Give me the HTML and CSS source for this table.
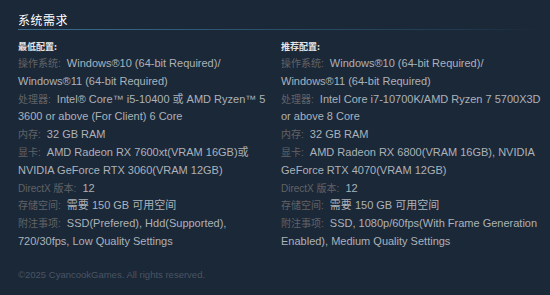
FILE: index.html
```html
<!DOCTYPE html>
<html lang="zh-CN">
  <head>
    <meta charset="UTF-8" />
    <meta name="viewport" content="width=device-width, initial-scale=1.0" />
    <title>系统需求</title>
    <link rel="stylesheet" href="styles.css">
  </head>
  <body>
    <div class="sys-req">
      <h2>系统需求</h2>

      <div class="columns">
        <div class="col">
          <div class="col-title">最低配置:</div>
          <ul class="req-list">
            <li><span class="label">操作系统:</span> Windows®10 (64-bit Required)/ Windows®11 (64-bit Required)</li>
            <li><span class="label">处理器:</span> Intel® Core™ i5-10400 或 AMD Ryzen™ 5 3600 or above (For Client) 6 Core</li>
            <li><span class="label">内存:</span> 32 GB RAM</li>
            <li><span class="label">显卡:</span> AMD Radeon RX 7600xt(VRAM 16GB)或 NVIDIA GeForce RTX 3060(VRAM 12GB)</li>
            <li><span class="label">DirectX 版本:</span> 12</li>
            <li><span class="label">存储空间:</span> 需要 150 GB 可用空间</li>
            <li><span class="label">附注事项:</span> SSD(Prefered), Hdd(Supported), 720/30fps, Low Quality Settings</li>
          </ul>
        </div>

        <div class="col">
          <div class="col-title">推荐配置:</div>
          <ul class="req-list">
            <li><span class="label">操作系统:</span> Windows®10 (64-bit Required)/ Windows®11 (64-bit Required)</li>
            <li><span class="label">处理器:</span> Intel Core i7-10700K/AMD Ryzen 7 5700X3D or above 8 Core</li>
            <li><span class="label">内存:</span> 32 GB RAM</li>
            <li><span class="label">显卡:</span> AMD Radeon RX 6800(VRAM 16GB), NVIDIA GeForce RTX 4070(VRAM 12GB)</li>
            <li><span class="label">DirectX 版本:</span> 12</li>
            <li><span class="label">存储空间:</span> 需要 150 GB 可用空间</li>
            <li><span class="label">附注事项:</span> SSD, 1080p/60fps(With Frame Generation Enabled), Medium Quality Settings</li>
          </ul>
        </div>
      </div>

      <p class="legal">©2025 CyancookGames. All rights reserved.</p>
    </div>
  </body>
</html>
```

FILE: styles.css
```css
body {
  margin: 0;
  background-color: #1b2838;
  font-family: "Liberation Sans", Arial, "Noto Sans CJK SC", sans-serif;
  color: #acb2b8;
}
.sys-req {
  width: 528px;
  padding: 11px 0 0 18px;
}
.sys-req h2 {
  width: 522px;
  margin: 0;
  padding-bottom: 1px;
  font-family: "Noto Sans CJK SC", sans-serif;
  font-size: 12px;
  font-weight: normal;
  line-height: 18px;
  letter-spacing: 0.5px;
  color: #fff;
  background-image: linear-gradient(to right, #3b6e8f 0%, #2e5470 40%, #1f3a50 85%, rgba(27, 40, 56, 0) 100%);
  background-size: 100% 1px;
  background-repeat: no-repeat;
  background-position: bottom left;
}
.columns {
  display: grid;
  grid-template-columns: 250px 1fr;
  column-gap: 13px;
  margin-top: 11px;
}
.col-title {
  font-family: "Noto Sans CJK SC", sans-serif;
  font-size: 9px;
  font-weight: bold;
  color: #e5e5e5;
  line-height: 12px;
  margin-bottom: 2px;
}
.req-list {
  list-style: none;
  margin: 0;
  padding: 0;
  font-size: 11px;
  line-height: 17.8px;
}
.label {
  font-size: 10px;
  line-height: 1;
  margin-right: 3px;
  color: #626366;
}
.legal {
  margin: 18px 0 0;
  font-size: 9.5px;
  line-height: 12px;
  color: #4a5563;
}
```
